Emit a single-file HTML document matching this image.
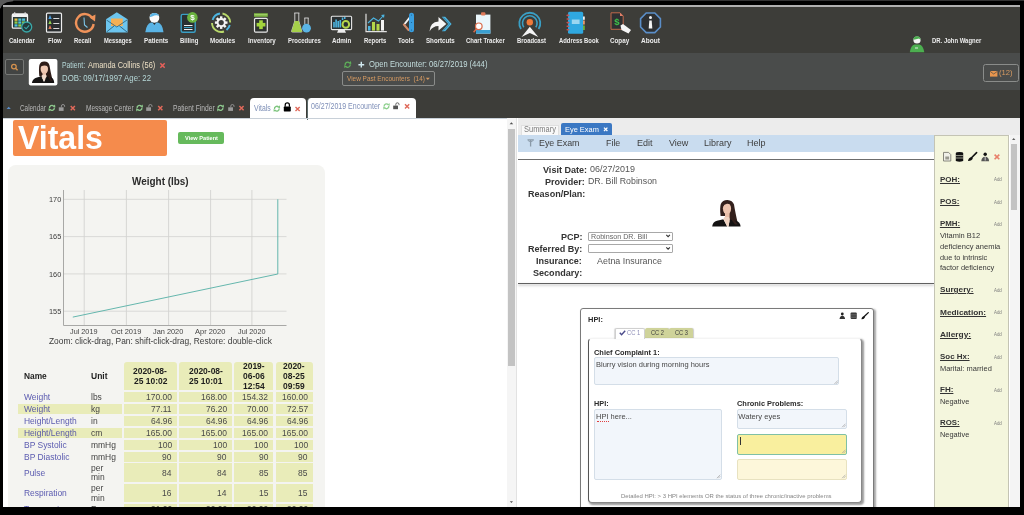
<!DOCTYPE html>
<html><head><meta charset="utf-8">
<style>
*{margin:0;padding:0;box-sizing:border-box}
html,body{width:1024px;height:515px;overflow:hidden;background:#fff;font-family:"Liberation Sans",sans-serif;position:relative;-webkit-font-smoothing:antialiased}
#wrap{position:absolute;left:0;top:0;width:1024px;height:515px;overflow:hidden;will-change:transform}
.a{position:absolute}
.nw{white-space:nowrap}
</style></head><body><div id="wrap">
<div class="a" style="left:0;top:5px;width:1024px;height:2px;background:#b0b0b0"></div>
<div class="a" style="left:0;top:7px;width:1024px;height:46px;background:#3d3d39"></div>
<div class="a" style="left:0;top:53px;width:1024px;height:37px;background:#4a4c4b"></div>
<div class="a" style="left:0;top:90px;width:1024px;height:28px;background:#3d3d39"></div>
<svg class="a" style="left:0;top:0" width="1024" height="60" viewBox="0 0 1024 60">
<!-- Calendar -->
<g>
<rect x="12.3" y="14" width="15.2" height="14.2" rx="1.2" fill="#2a3a3a" stroke="#f2f2f2" stroke-width="1.3"/>
<rect x="12.3" y="14" width="15.2" height="3" fill="#f2f2f2"/>
<rect x="14" y="12.3" width="1.3" height="2.5" fill="#ddd"/><rect x="24.5" y="12.3" width="1.3" height="2.5" fill="#ddd"/>
<rect x="14.5" y="18.5" width="3" height="2.3" fill="#e8c64a"/><rect x="18.3" y="18.5" width="3" height="2.3" fill="#4cc3d9"/><rect x="22.1" y="18.5" width="3" height="2.3" fill="#4cc3d9"/>
<rect x="14.5" y="21.4" width="3" height="2.3" fill="#8fcf50"/><rect x="18.3" y="21.4" width="3" height="2.3" fill="#4cc3d9"/><rect x="22.1" y="21.4" width="3" height="2.3" fill="#8fcf50"/>
<rect x="14.5" y="24.3" width="3" height="2.3" fill="#4cc3d9"/><rect x="18.3" y="24.3" width="3" height="2.3" fill="#8fcf50"/>
<circle cx="26.7" cy="27" r="5" fill="#243a3c" stroke="#3aa8a8" stroke-width="1.3"/>
<path d="M24.4 27.1 L26.1 28.8 L29.2 25.3" fill="none" stroke="#3aa8a8" stroke-width="1.1"/>
</g>
<!-- Flow -->
<g>
<rect x="46.5" y="13.2" width="15" height="19" rx="1" fill="#2a2e30" stroke="#efefef" stroke-width="1.2"/>
<path d="M48.3 19 L50 15 L51.7 19Z" fill="#4a9fe0"/>
<path d="M48.3 24 L50 20 L51.7 24Z" fill="#8fcf50"/>
<path d="M48.3 29 L50 25 L51.7 29Z" fill="#e07a5a"/>
<rect x="53.3" y="18" width="6" height="0.9" fill="#eee"/><rect x="53.3" y="23" width="6" height="0.9" fill="#eee"/><rect x="53.3" y="28" width="6" height="0.9" fill="#eee"/>
</g>
<!-- Recall -->
<g>
<path d="M92.5 18.5 A8.8 8.8 0 1 0 93.6 24" fill="none" stroke="#f0935a" stroke-width="2.4"/>
<path d="M89.5 17.5 L95.5 14.5 L95 21.5Z" fill="#f0935a"/>
<path d="M84 17.5 L84.5 25 L87.5 27.5" fill="none" stroke="#7cc4e8" stroke-width="1.1"/>
</g>
<!-- Messages -->
<g>
<path d="M106 19.3 L116.8 12.2 L127.6 19.3 L127.6 32.5 L106 32.5Z" fill="#6cc5ee"/>
<path d="M111 18.5 L122.8 18.5 L122.8 26 L111 26Z" fill="#f5b055"/>
<path d="M106.5 20 L116.8 27 L127 20" fill="none" stroke="#2c5f7a" stroke-width="0.8"/>
<path d="M106.5 32 L114 26 M127 32 L119.5 26" fill="none" stroke="#2c5f7a" stroke-width="0.9"/>
</g>
<!-- Patients -->
<g>
<path d="M145.3 32.3 Q146.5 23.5 151 22.6 L157.8 22.6 Q162.5 23.5 163.5 32.3Z" fill="#5ab4e5"/>
<path d="M152.5 22.6 L154.4 25 L156.3 22.6Z" fill="#2a2e30"/>
<circle cx="154.4" cy="17.8" r="4.9" fill="#fafafa"/>
<path d="M149.6 17.2 Q150.3 12.9 154.4 12.9 Q158.3 12.9 159.1 16 Q157 14.6 154.5 15.6 Q152 16.6 149.6 17.2Z" fill="#5ab4e5"/>
</g>
<!-- Billing -->
<g>
<rect x="181.2" y="14.4" width="14" height="17.8" rx="1.5" fill="#2a3032" stroke="#3a9fc5" stroke-width="1.4"/>
<rect x="184" y="25" width="8.5" height="1" fill="#f0f0f0"/><rect x="184" y="27" width="8.5" height="1" fill="#3a9fc5"/><rect x="184" y="29" width="8.5" height="1" fill="#f0f0f0"/>
<circle cx="192.4" cy="17.4" r="5.3" fill="#6ab33e"/>
<text x="192.4" y="20.3" font-family="Liberation Sans" font-weight="bold" font-size="8" fill="#fff" text-anchor="middle">$</text>
</g>
<!-- Modules -->
<g fill="none" stroke-width="1.9">
<path d="M212.6 20 A9.2 9.2 0 0 1 220 13.5" stroke="#4cb4e0"/>
<path d="M222.5 13.5 A9.2 9.2 0 0 1 230.2 22.5" stroke="#b8d86a"/>
<path d="M229.8 25 A9.2 9.2 0 0 1 226.5 30" stroke="#4cb4e0"/>
<path d="M224 31.5 A9.2 9.2 0 0 1 212 23" stroke="#b8d86a"/>
</g>
<g transform="translate(221.2 22.6)">
<circle r="4.6" fill="#f4f4f4"/>
<g fill="#f4f4f4"><rect x="-1.2" y="-6.3" width="2.4" height="12.6"/><rect x="-1.2" y="-6.3" width="2.4" height="12.6" transform="rotate(45)"/><rect x="-1.2" y="-6.3" width="2.4" height="12.6" transform="rotate(90)"/><rect x="-1.2" y="-6.3" width="2.4" height="12.6" transform="rotate(135)"/></g>
<circle r="2.6" fill="#3a3a38"/>
</g>
<!-- Inventory -->
<g>
<rect x="254" y="13.2" width="13.8" height="3.6" fill="#7cb342"/>
<rect x="254.5" y="14.2" width="12.8" height="1" fill="#a6d36b"/>
<rect x="254.5" y="18.4" width="12.8" height="13.8" rx="1.2" fill="#2e3230" stroke="#e8e8e8" stroke-width="1.2"/>
<rect x="259.2" y="20.3" width="3.6" height="8.8" fill="#a4d63c"/><rect x="256.6" y="22.9" width="8.8" height="3.6" fill="#a4d63c"/>
</g>
<!-- Procedures -->
<g>
<path d="M294.2 13 L299.4 13 M294.8 13 L294.8 21 L291.5 31.5 Q291.5 32 292.5 32 L301.5 32 Q302 32 301.8 31.5 L298.8 21 L298.8 13" fill="none" stroke="#d8d8d8" stroke-width="0.9"/>
<path d="M294.8 21 L298.8 21 L301.8 31.6 Q302 32 301.5 32 L292.5 32 Q291.5 32 291.5 31.5Z" fill="#a5d04a"/>
<path d="M304.3 18 L308.7 18 M304.8 18 L304.8 24.5 M308.2 18 L308.2 24.5" fill="none" stroke="#d8d8d8" stroke-width="0.9"/>
<circle cx="306.5" cy="28.2" r="4.4" fill="#5ab4e5"/>
</g>
<!-- Admin -->
<g>
<rect x="331.3" y="16.3" width="20.3" height="13.3" rx="1" fill="#2a3032" stroke="#e8e8e8" stroke-width="1.1"/>
<path d="M338.5 29.6 L337 32.8 L346 32.8 L344.5 29.6Z" fill="#eee"/>
<rect x="333.2" y="22" width="1.6" height="5.5" fill="#4cb4e0"/><rect x="335.3" y="19.5" width="1.6" height="8" fill="#4cb4e0"/><rect x="337.4" y="21" width="1.6" height="6.5" fill="#4cb4e0"/><rect x="339.5" y="20" width="1.6" height="7.5" fill="#4cb4e0"/>
<rect x="341.8" y="17.5" width="1.5" height="2.5" fill="#4cb4e0"/><rect x="344" y="17" width="1.5" height="2" fill="#4cb4e0"/>
<circle cx="345.8" cy="24.4" r="3.3" fill="none" stroke="#b5d64a" stroke-width="2"/>
</g>
<!-- Reports -->
<g>
<path d="M366 13.8 L366 31.6 L386.8 31.6" fill="none" stroke="#e0e0e0" stroke-width="1.2"/>
<rect x="368" y="26" width="2.5" height="4.6" fill="#4cb4e0"/>
<rect x="372" y="22" width="3" height="8.6" fill="#b5d64a"/>
<rect x="376.5" y="24" width="3" height="6.6" fill="#b5d64a"/>
<rect x="381" y="20" width="3" height="10.6" fill="#f4f4f4"/>
<path d="M368 23 L373.5 18 L378.5 21 L383 16" fill="none" stroke="#4cb4e0" stroke-width="1.1"/>
<path d="M381 15 L384.5 14.5 L384 18Z" fill="#4cb4e0"/>
</g>
<!-- Tools -->
<g>
<path d="M410.5 16.5 L405 23.5" stroke="#f4f4f4" stroke-width="2" stroke-linecap="round"/>
<path d="M403.8 24.5 L408.5 30" stroke="#d08a6a" stroke-width="2" stroke-linecap="round"/>
<rect x="409" y="12.8" width="5" height="19.5" rx="2.5" fill="#3a9fe0"/>
<circle cx="411.5" cy="15" r="0.6" fill="#1c5f8a"/><circle cx="411.5" cy="22.5" r="0.6" fill="#1c5f8a"/><circle cx="411.5" cy="30" r="0.6" fill="#1c5f8a"/>
</g>
<!-- Shortcuts -->
<g>
<path d="M429.5 31.5 Q430 22 438.5 21.5 L438.5 17 L446.3 24 L438.5 30.5 L438.5 26 Q432.5 26 429.5 31.5Z" fill="#f6f6f6"/>
<path d="M441.8 16.8 L445.2 16.8 L451.6 24 L445.2 31.2 L441.8 31.2 L448.2 24Z" fill="#4cb4e0"/><path d="M443.4 17.5 L449.6 24 L443.4 30.5" fill="none" stroke="#1f4f66" stroke-width="0.5"/>
</g>
<!-- Chart Tracker -->
<g>
<rect x="476" y="14.6" width="14.4" height="19" fill="#eaf6fb"/>
<rect x="476" y="30" width="14.4" height="3.6" fill="#3a9fd0"/>
<rect x="481" y="12.2" width="4.4" height="3.2" rx="1" fill="#e07a5a"/>
<circle cx="478.8" cy="26.3" r="3.3" fill="#fff" stroke="#d86a4a" stroke-width="1.2"/>
<path d="M476.5 28.8 L473.6 32.2" stroke="#d86a4a" stroke-width="1.5"/>
</g>
<!-- Broadcast -->
<g fill="none" stroke="#3a9fc5">
<path d="M521 29 A10.5 10.5 0 1 1 538.6 29" stroke-width="1.8"/>
<path d="M523.8 27.2 A7.3 7.3 0 1 1 535.8 27.2" stroke-width="1.6"/>
</g>
<circle cx="529.8" cy="22.3" r="3.2" fill="#f07a3a"/>
<path d="M529.8 26.8 L521.5 37 L529.8 33 L538.3 37Z" fill="#f4f4f4"/>
<!-- Address Book -->
<g>
<rect x="568" y="11.8" width="15.2" height="22" rx="1.6" fill="#2fa8e0"/>
<rect x="583" y="16.5" width="1.8" height="3.3" fill="#f0f0f0"/><rect x="583" y="20.5" width="1.8" height="4" fill="#e89a6a"/><rect x="583" y="25.5" width="1.8" height="4.5" fill="#6ab33e"/>
<g fill="#c85050"><rect x="566.4" y="14.6" width="3" height="1.6" rx="0.8"/><rect x="566.4" y="18.2" width="3" height="1.6" rx="0.8"/><rect x="566.4" y="21.8" width="3" height="1.6" rx="0.8"/><rect x="566.4" y="25.4" width="3" height="1.6" rx="0.8"/><rect x="566.4" y="29" width="3" height="1.6" rx="0.8"/></g>
<rect x="571.8" y="19.5" width="7.8" height="4.5" fill="#9ad6f0"/>
</g>
<!-- Copay -->
<g>
<path d="M611 12.8 L620 12.8 L623.2 16 L623.2 29.3 L611 29.3Z" fill="#2e3032" stroke="#c0694a" stroke-width="1"/>
<path d="M620 12.8 L623.2 16 L620 16Z" fill="#e0806a"/>
<text x="617" y="24.5" font-family="Liberation Sans" font-weight="bold" font-size="9.5" fill="#3ec04a" text-anchor="middle">$</text>
<path d="M620.5 25.5 L623 24 L631 30 L628.5 33.5 L621.5 30Z" fill="#f6f6f6"/>
</g>
<!-- About -->
<g>
<path d="M646.2 13 L654.8 13 L660.4 18.6 L660.4 27 L654.8 32.6 L646.2 32.6 L640.6 27 L640.6 18.6Z" fill="#2e3032" stroke="#5b8ec8" stroke-width="1.6"/>
<circle cx="650.5" cy="17.6" r="1.5" fill="#f4f4f4"/>
<path d="M649.3 20.5 L651.7 20.5 L652.3 28.5 L648.7 28.5Z" fill="#f4f4f4"/>
</g>
<!-- Doctor -->
<g>
<path d="M909.8 52.2 Q911 45 914.5 44.5 L919.5 44.5 Q923 45 924.3 52.2Z" fill="#4caf50"/>
<circle cx="917" cy="40" r="3.6" fill="#f4f4f4"/>
<path d="M913.4 39.8 A3.6 3.6 0 0 1 920.6 39.8 L919 38.6 L915 39.5Z" fill="#4caf50"/>
<rect x="915" y="47.5" width="3" height="1" fill="#e0f0e0"/>
</g>
</svg>

<div class="a nw" style="left:9.00px;top:35.80px;font-size:7.8px;line-height:9px;color:#ececec;font-weight:bold;transform:scaleX(0.773);transform-origin:0 0;">Calendar</div>
<div class="a nw" style="left:47.60px;top:35.80px;font-size:7.8px;line-height:9px;color:#ececec;font-weight:bold;transform:scaleX(0.777);transform-origin:0 0;">Flow</div>
<div class="a nw" style="left:74.00px;top:35.80px;font-size:7.8px;line-height:9px;color:#ececec;font-weight:bold;transform:scaleX(0.757);transform-origin:0 0;">Recall</div>
<div class="a nw" style="left:103.60px;top:35.80px;font-size:7.8px;line-height:9px;color:#ececec;font-weight:bold;transform:scaleX(0.746);transform-origin:0 0;">Messages</div>
<div class="a nw" style="left:143.60px;top:35.80px;font-size:7.8px;line-height:9px;color:#ececec;font-weight:bold;transform:scaleX(0.801);transform-origin:0 0;">Patients</div>
<div class="a nw" style="left:179.60px;top:35.80px;font-size:7.8px;line-height:9px;color:#ececec;font-weight:bold;transform:scaleX(0.768);transform-origin:0 0;">Billing</div>
<div class="a nw" style="left:210.20px;top:35.80px;font-size:7.8px;line-height:9px;color:#ececec;font-weight:bold;transform:scaleX(0.797);transform-origin:0 0;">Modules</div>
<div class="a nw" style="left:247.60px;top:35.80px;font-size:7.8px;line-height:9px;color:#ececec;font-weight:bold;transform:scaleX(0.792);transform-origin:0 0;">Inventory</div>
<div class="a nw" style="left:287.60px;top:35.80px;font-size:7.8px;line-height:9px;color:#ececec;font-weight:bold;transform:scaleX(0.764);transform-origin:0 0;">Procedures</div>
<div class="a nw" style="left:332.10px;top:35.80px;font-size:7.8px;line-height:9px;color:#ececec;font-weight:bold;transform:scaleX(0.795);transform-origin:0 0;">Admin</div>
<div class="a nw" style="left:363.60px;top:35.80px;font-size:7.8px;line-height:9px;color:#ececec;font-weight:bold;transform:scaleX(0.760);transform-origin:0 0;">Reports</div>
<div class="a nw" style="left:398.35px;top:35.80px;font-size:7.8px;line-height:9px;color:#ececec;font-weight:bold;transform:scaleX(0.781);transform-origin:0 0;">Tools</div>
<div class="a nw" style="left:425.60px;top:35.80px;font-size:7.8px;line-height:9px;color:#ececec;font-weight:bold;transform:scaleX(0.791);transform-origin:0 0;">Shortcuts</div>
<div class="a nw" style="left:465.60px;top:35.80px;font-size:7.8px;line-height:9px;color:#ececec;font-weight:bold;transform:scaleX(0.772);transform-origin:0 0;">Chart Tracker</div>
<div class="a nw" style="left:517.10px;top:35.80px;font-size:7.8px;line-height:9px;color:#ececec;font-weight:bold;transform:scaleX(0.758);transform-origin:0 0;">Broadcast</div>
<div class="a nw" style="left:558.60px;top:35.80px;font-size:7.8px;line-height:9px;color:#ececec;font-weight:bold;transform:scaleX(0.753);transform-origin:0 0;">Address Book</div>
<div class="a nw" style="left:610.20px;top:35.80px;font-size:7.8px;line-height:9px;color:#ececec;font-weight:bold;transform:scaleX(0.805);transform-origin:0 0;">Copay</div>
<div class="a nw" style="left:640.60px;top:35.80px;font-size:7.8px;line-height:9px;color:#ececec;font-weight:bold;transform:scaleX(0.835);transform-origin:0 0;">About</div>
<div class="a" style="left:5.4px;top:59px;width:18.4px;height:16px;border:1px solid #767876;border-radius:2px;background:#424443"></div>
<svg class="a" style="left:0;top:50px" width="70" height="40" viewBox="0 50 70 40">
<circle cx="13.9" cy="66.6" r="2.3" fill="none" stroke="#d4914e" stroke-width="1.3"/>
<path d="M15.5 68.3 L17.6 70.3" stroke="#d4914e" stroke-width="1.5"/>
<rect x="28.8" y="58.9" width="28.6" height="26.6" rx="2" fill="#fff"/>
<path d="M39.3 76 Q38.6 69 39.4 65 Q40.6 61.5 44.4 61.6 Q48.6 61.8 49.5 65.5 Q50.5 72 52.5 80 L47 80Z" fill="#2e1c18"/><ellipse cx="44.3" cy="68.9" rx="3.7" ry="5.2" fill="#f0c8b2"/><path d="M40.6 66.5 Q41.2 62.8 44.8 62.9 Q48.2 63.2 48.6 67.5 Q46.5 64 40.6 66.5Z" fill="#2e1c18"/><rect x="42.6" y="72.5" width="3.4" height="4.5" fill="#e8bca6"/><path d="M31.9 83 Q32.5 78.4 37 77.4 L41.4 76.2 L44 82 L46.8 76.2 L51.4 77.4 Q54 78.4 54.2 83Z" fill="#161414"/><path d="M41.4 76 L44 81.5 L46.8 76 L45.8 74.8 L42.6 74.8Z" fill="#f4dccc"/><path d="M48 72.5 Q49.8 76.5 52.5 81 L50.5 81 Q48.3 77.5 47.2 74Z" fill="#2e1c18"/><!-- refresh icon -->
</svg>
<svg class="a" style="left:159px;top:62px" width="7" height="7" viewBox="0 0 7 7"><path d="M1.3 1.3 L5.7 5.7 M5.7 1.3 L1.3 5.7" stroke="#e8605a" stroke-width="1.5"/></svg>

<svg class="a" style="left:340px;top:58px" width="30" height="14" viewBox="340 58 30 14">
<path d="M345.20 65.10 A2.5 2.5 0 0 1 349.57 63.05" fill="none" stroke="#5fb05a" stroke-width="1.3"/><path d="M350.20 64.30 A2.5 2.5 0 0 1 345.82 66.35" fill="none" stroke="#5fb05a" stroke-width="1.3"/><path d="M348.57 63.33 L351.32 64.20 L350.95 61.08Z" fill="#5fb05a"/><path d="M346.82 66.08 L344.07 65.20 L344.45 68.33Z" fill="#5fb05a"/><path d="M361.3 61.8 L361.3 67.6 M358.4 64.7 L364.2 64.7" stroke="#d0e8f0" stroke-width="1.4"/>
</svg>
<div class="a" style="left:342px;top:70.8px;width:93px;height:15.4px;border:1px solid #8a8c8a;border-radius:2px"></div>

<div class="a" style="left:983px;top:64.3px;width:35.6px;height:18.2px;border:1px solid #8a8c8a;border-radius:2.5px"></div>
<svg class="a" style="left:989.5px;top:70.5px" width="8" height="6" viewBox="0 0 8 6"><rect x="0" y="0" width="7.4" height="5.6" fill="#e8964e"/><path d="M0 0.3 L3.7 3 L7.4 0.3" fill="none" stroke="#4a4c4b" stroke-width="0.7"/></svg>
<div class="a nw" style="left:62.40px;top:60.20px;font-size:8.4px;line-height:10px;color:#b6d8d8;transform:scaleX(0.813);transform-origin:0 0;">Patient: </div>
<div class="a nw" style="left:88.00px;top:60.20px;font-size:8.4px;line-height:10px;color:#ecdfc4;transform:scaleX(0.886);transform-origin:0 0;">Amanda Collins (56)</div>
<div class="a nw" style="left:62.40px;top:72.80px;font-size:8.4px;line-height:10px;color:#b6d8d8;transform:scaleX(0.933);transform-origin:0 0;">DOB: 09/17/1997 Age: 22</div>
<div class="a nw" style="left:369.00px;top:59.40px;font-size:8.4px;line-height:10px;color:#c4dede;transform:scaleX(0.915);transform-origin:0 0;">Open Encounter: 06/27/2019 (444)</div>
<div class="a nw" style="left:347.40px;top:74.40px;font-size:7.4px;line-height:9px;color:#d69a62;transform:scaleX(0.871);transform-origin:0 0;white-space:pre">View Past Encounters  (14)</div>
<svg class="a" style="left:425px;top:77px" width="6" height="4" viewBox="0 0 6 4"><path d="M0.8 0.8 L2.8 3 L4.8 0.8Z" fill="#d69a62"/></svg>
<div class="a nw" style="left:931.70px;top:36.60px;font-size:6.8px;line-height:8px;color:#ececec;font-weight:bold;transform:scaleX(0.874);transform-origin:0 0;">DR. John Wagner</div>
<div class="a nw" style="left:998.70px;top:68.40px;font-size:8px;line-height:10px;color:#d69a62;transform:scaleX(0.955);transform-origin:0 0;">(12)</div>
<div class="a" style="left:250px;top:98px;width:56px;height:22px;background:#fff;border-radius:4px 4px 0 0"></div>
<div class="a" style="left:306.5px;top:98px;width:109.5px;height:22px;background:#fff;border-radius:4px 4px 0 0;border-left:1px solid #5a6a6a"></div>
<div class="a" style="left:3px;top:117.5px;width:514px;height:1px;background:#c8d0d8"></div>
<div class="a nw" style="left:20.00px;top:103.60px;font-size:8.2px;line-height:10px;color:#b9b9b9;transform:scaleX(0.779);transform-origin:0 0;">Calendar</div>
<div class="a nw" style="left:85.50px;top:103.60px;font-size:8.2px;line-height:10px;color:#b9b9b9;transform:scaleX(0.792);transform-origin:0 0;">Message Center</div>
<div class="a nw" style="left:173.00px;top:103.60px;font-size:8.2px;line-height:10px;color:#b9b9b9;transform:scaleX(0.818);transform-origin:0 0;">Patient Finder</div>
<div class="a nw" style="left:254.00px;top:104.20px;font-size:8.2px;line-height:10px;color:#7b8db5;transform:scaleX(0.840);transform-origin:0 0;">Vitals</div>
<div class="a nw" style="left:310.80px;top:101.90px;font-size:8.2px;line-height:10px;color:#7f8fb8;transform:scaleX(0.858);transform-origin:0 0;">06/27/2019 Encounter</div>
<svg class="a" style="left:0;top:90px" width="420" height="30" viewBox="0 90 420 30"><path d="M6.6 109 L8.7 106.8 L10.8 109Z" fill="#5b8ec8"/><path d="M49.50 108.30 A2.4 2.4 0 0 1 53.70 106.32" fill="none" stroke="#8ec98e" stroke-width="1.3"/><path d="M54.30 107.50 A2.4 2.4 0 0 1 50.10 109.48" fill="none" stroke="#8ec98e" stroke-width="1.3"/><path d="M52.74 106.58 L55.38 107.42 L55.02 104.42Z" fill="#8ec98e"/><path d="M51.06 109.22 L48.42 108.38 L48.78 111.38Z" fill="#8ec98e"/><rect x="58.8" y="107.3" width="4.8" height="3.6" fill="#9a9a9a"/><path d="M61.4 107.3 L61.4 106.1 A1.6 1.6 0 0 1 64.6 106.1 L64.6 106.89999999999999" fill="none" stroke="#9a9a9a" stroke-width="0.9"/><path d="M70.7 106.0 L74.89999999999999 110.19999999999999 M74.89999999999999 106.0 L70.7 110.19999999999999" stroke="#e0695a" stroke-width="1.5"/><path d="M137.10 108.30 A2.4 2.4 0 0 1 141.30 106.32" fill="none" stroke="#8ec98e" stroke-width="1.3"/><path d="M141.90 107.50 A2.4 2.4 0 0 1 137.70 109.48" fill="none" stroke="#8ec98e" stroke-width="1.3"/><path d="M140.34 106.58 L142.98 107.42 L142.62 104.42Z" fill="#8ec98e"/><path d="M138.66 109.22 L136.02 108.38 L136.38 111.38Z" fill="#8ec98e"/><rect x="146.2" y="107.3" width="4.8" height="3.6" fill="#9a9a9a"/><path d="M148.79999999999998 107.3 L148.79999999999998 106.1 A1.6 1.6 0 0 1 152.0 106.1 L152.0 106.89999999999999" fill="none" stroke="#9a9a9a" stroke-width="0.9"/><path d="M158.20000000000002 106.0 L162.4 110.19999999999999 M162.4 106.0 L158.20000000000002 110.19999999999999" stroke="#e0695a" stroke-width="1.5"/><path d="M218.10 108.30 A2.4 2.4 0 0 1 222.30 106.32" fill="none" stroke="#8ec98e" stroke-width="1.3"/><path d="M222.90 107.50 A2.4 2.4 0 0 1 218.70 109.48" fill="none" stroke="#8ec98e" stroke-width="1.3"/><path d="M221.34 106.58 L223.98 107.42 L223.62 104.42Z" fill="#8ec98e"/><path d="M219.66 109.22 L217.02 108.38 L217.38 111.38Z" fill="#8ec98e"/><rect x="228.2" y="107.3" width="4.8" height="3.6" fill="#9a9a9a"/><path d="M230.79999999999998 107.3 L230.79999999999998 106.1 A1.6 1.6 0 0 1 234.0 106.1 L234.0 106.89999999999999" fill="none" stroke="#9a9a9a" stroke-width="0.9"/><path d="M239.4 106.0 L243.6 110.19999999999999 M243.6 106.0 L239.4 110.19999999999999" stroke="#e0695a" stroke-width="1.5"/><path d="M274.50 109.10 A2.3 2.3 0 0 1 278.53 107.18" fill="none" stroke="#7cc47c" stroke-width="1.3"/><path d="M279.10 108.30 A2.3 2.3 0 0 1 275.07 110.22" fill="none" stroke="#7cc47c" stroke-width="1.3"/><path d="M277.61 107.44 L280.13 108.24 L279.79 105.37Z" fill="#7cc47c"/><path d="M276.00 109.97 L273.47 109.16 L273.81 112.03Z" fill="#7cc47c"/><rect x="283.8" y="106.6" width="7" height="4.8" rx="0.6" fill="#000"/><path d="M285.2 106.8 L285.2 105 A2.1 2.1 0 0 1 289.4 105 L289.4 106.8" fill="none" stroke="#000" stroke-width="1.2"/><path d="M295.5 106.9 L299.70000000000005 111.1 M299.70000000000005 106.9 L295.5 111.1" stroke="#e0695a" stroke-width="1.4"/><path d="M384.20 106.70 A2.3 2.3 0 0 1 388.23 104.78" fill="none" stroke="#8ed08e" stroke-width="1.3"/><path d="M388.80 105.90 A2.3 2.3 0 0 1 384.77 107.82" fill="none" stroke="#8ed08e" stroke-width="1.3"/><path d="M387.31 105.03 L389.83 105.84 L389.49 102.97Z" fill="#8ed08e"/><path d="M385.69 107.56 L383.17 106.76 L383.51 109.63Z" fill="#8ed08e"/><rect x="393.2" y="105.6" width="4.8" height="3.6" fill="#555"/><path d="M395.8 105.6 L395.8 104.39999999999999 A1.6 1.6 0 0 1 399.0 104.39999999999999 L399.0 105.19999999999999" fill="none" stroke="#555" stroke-width="0.9"/><path d="M405.0 104.2 L409.20000000000005 108.39999999999999 M409.20000000000005 104.2 L405.0 108.39999999999999" stroke="#e0695a" stroke-width="1.4"/></svg>
<div class="a" style="left:13px;top:120.2px;width:154px;height:35.6px;background:#f58b4c;border-radius:2px"></div>
<div class="a nw" style="left:17.80px;top:118.50px;font-size:32.5px;line-height:38px;color:#fff;font-weight:bold;transform:scaleX(0.985);transform-origin:0 0;">Vitals</div>
<div class="a" style="left:178px;top:132px;width:46px;height:12px;background:#66ba5c;border-radius:2px"></div>
<div class="a nw" style="left:184.50px;top:134.50px;font-size:6px;line-height:7px;color:#fff;font-weight:bold;transform:scaleX(0.936);transform-origin:0 0;">View Patient</div>
<div class="a" style="left:7.6px;top:165px;width:317px;height:350px;background:#f4f4f1;border-radius:8px 8px 0 0"></div>
<svg class="a" style="left:0;top:160px" width="330" height="190" viewBox="0 160 330 190"><line x1="63.5" y1="199.3" x2="286.5" y2="199.3" stroke="#d6d6d4" stroke-width="0.9"/><line x1="63.5" y1="236.6" x2="286.5" y2="236.6" stroke="#d6d6d4" stroke-width="0.9"/><line x1="63.5" y1="273.9" x2="286.5" y2="273.9" stroke="#d6d6d4" stroke-width="0.9"/><line x1="63.5" y1="311.2" x2="286.5" y2="311.2" stroke="#d6d6d4" stroke-width="0.9"/><line x1="84.2" y1="190" x2="84.2" y2="325.5" stroke="#d2d2d0" stroke-width="0.9"/><line x1="126.4" y1="190" x2="126.4" y2="325.5" stroke="#d2d2d0" stroke-width="0.9"/><line x1="168.6" y1="190" x2="168.6" y2="325.5" stroke="#d2d2d0" stroke-width="0.9"/><line x1="210.6" y1="190" x2="210.6" y2="325.5" stroke="#d2d2d0" stroke-width="0.9"/><line x1="251.9" y1="190" x2="251.9" y2="325.5" stroke="#d2d2d0" stroke-width="0.9"/><path d="M63.5 190 L63.5 325.5 L286.5 325.5" fill="none" stroke="#a8a8a6" stroke-width="1"/><path d="M72.8 317.1 L277.8 274 L277.8 199.3" fill="none" stroke="#5db3aa" stroke-width="0.95"/></svg>
<div class="a nw" style="left:131.60px;top:175.20px;font-size:10.6px;line-height:12px;color:#2b2b2b;font-weight:bold;transform:scaleX(0.938);transform-origin:0 0;">Weight (lbs)</div>
<div class="a nw" style="left:49.00px;top:195.90px;font-size:8px;line-height:8px;color:#3a3a3a;transform:scaleX(0.921);transform-origin:0 0;">170</div>
<div class="a nw" style="left:49.00px;top:233.20px;font-size:8px;line-height:8px;color:#3a3a3a;transform:scaleX(0.921);transform-origin:0 0;">165</div>
<div class="a nw" style="left:49.00px;top:270.50px;font-size:8px;line-height:8px;color:#3a3a3a;transform:scaleX(0.921);transform-origin:0 0;">160</div>
<div class="a nw" style="left:49.00px;top:307.80px;font-size:8px;line-height:8px;color:#3a3a3a;transform:scaleX(0.921);transform-origin:0 0;">155</div>
<div class="a nw" style="left:70.45px;top:328.20px;font-size:7.2px;line-height:8px;color:#444;transform:scaleX(1.011);transform-origin:0 0;">Jul 2019</div>
<div class="a nw" style="left:111.25px;top:328.20px;font-size:7.2px;line-height:8px;color:#444;transform:scaleX(1.039);transform-origin:0 0;">Oct 2019</div>
<div class="a nw" style="left:153.45px;top:328.20px;font-size:7.2px;line-height:8px;color:#444;transform:scaleX(1.024);transform-origin:0 0;">Jan 2020</div>
<div class="a nw" style="left:195.45px;top:328.20px;font-size:7.2px;line-height:8px;color:#444;transform:scaleX(1.039);transform-origin:0 0;">Apr 2020</div>
<div class="a nw" style="left:238.15px;top:328.20px;font-size:7.2px;line-height:8px;color:#444;transform:scaleX(1.011);transform-origin:0 0;">Jul 2020</div>
<div class="a nw" style="left:48.70px;top:336.50px;font-size:8.2px;line-height:10px;color:#3a3a3a;transform:scaleX(1.023);transform-origin:0 0;">Zoom: click-drag, Pan: shift-click-drag, Restore: double-click</div>
<div class="a" style="left:123.9px;top:361.5px;width:53.0px;height:28.8px;background:#e9ecb9;border-radius:3px 3px 0 0"></div>
<div class="a" style="left:179.2px;top:361.5px;width:52.8px;height:28.8px;background:#e9ecb9;border-radius:3px 3px 0 0"></div>
<div class="a" style="left:234.2px;top:361.5px;width:39.1px;height:28.8px;background:#e9ecb9;border-radius:3px 3px 0 0"></div>
<div class="a" style="left:275.5px;top:361.5px;width:37.5px;height:28.8px;background:#e9ecb9;border-radius:3px 3px 0 0"></div>
<div class="a" style="left:123.9px;top:392.3px;width:53.0px;height:10.2px;background:#e9ecb9"></div>
<div class="a" style="left:179.2px;top:392.3px;width:52.8px;height:10.2px;background:#e9ecb9"></div>
<div class="a" style="left:234.2px;top:392.3px;width:39.1px;height:10.2px;background:#e9ecb9"></div>
<div class="a" style="left:275.5px;top:392.3px;width:37.5px;height:10.2px;background:#e9ecb9"></div>
<div class="a" style="left:17.8px;top:404.1px;width:104.3px;height:10.4px;background:#e9ecb9"></div>
<div class="a" style="left:123.9px;top:404.1px;width:53.0px;height:10.4px;background:#e9ecb9"></div>
<div class="a" style="left:179.2px;top:404.1px;width:52.8px;height:10.4px;background:#e9ecb9"></div>
<div class="a" style="left:234.2px;top:404.1px;width:39.1px;height:10.4px;background:#e9ecb9"></div>
<div class="a" style="left:275.5px;top:404.1px;width:37.5px;height:10.4px;background:#e9ecb9"></div>
<div class="a" style="left:123.9px;top:415.9px;width:53.0px;height:10.5px;background:#e9ecb9"></div>
<div class="a" style="left:179.2px;top:415.9px;width:52.8px;height:10.5px;background:#e9ecb9"></div>
<div class="a" style="left:234.2px;top:415.9px;width:39.1px;height:10.5px;background:#e9ecb9"></div>
<div class="a" style="left:275.5px;top:415.9px;width:37.5px;height:10.5px;background:#e9ecb9"></div>
<div class="a" style="left:17.8px;top:427.8px;width:104.3px;height:10.3px;background:#e9ecb9"></div>
<div class="a" style="left:123.9px;top:427.8px;width:53.0px;height:10.3px;background:#e9ecb9"></div>
<div class="a" style="left:179.2px;top:427.8px;width:52.8px;height:10.3px;background:#e9ecb9"></div>
<div class="a" style="left:234.2px;top:427.8px;width:39.1px;height:10.3px;background:#e9ecb9"></div>
<div class="a" style="left:275.5px;top:427.8px;width:37.5px;height:10.3px;background:#e9ecb9"></div>
<div class="a" style="left:123.9px;top:439.7px;width:53.0px;height:10.4px;background:#e9ecb9"></div>
<div class="a" style="left:179.2px;top:439.7px;width:52.8px;height:10.4px;background:#e9ecb9"></div>
<div class="a" style="left:234.2px;top:439.7px;width:39.1px;height:10.4px;background:#e9ecb9"></div>
<div class="a" style="left:275.5px;top:439.7px;width:37.5px;height:10.4px;background:#e9ecb9"></div>
<div class="a" style="left:123.9px;top:451.6px;width:53.0px;height:10.4px;background:#e9ecb9"></div>
<div class="a" style="left:179.2px;top:451.6px;width:52.8px;height:10.4px;background:#e9ecb9"></div>
<div class="a" style="left:234.2px;top:451.6px;width:39.1px;height:10.4px;background:#e9ecb9"></div>
<div class="a" style="left:275.5px;top:451.6px;width:37.5px;height:10.4px;background:#e9ecb9"></div>
<div class="a" style="left:123.9px;top:463.4px;width:53.0px;height:18.6px;background:#e9ecb9"></div>
<div class="a" style="left:179.2px;top:463.4px;width:52.8px;height:18.6px;background:#e9ecb9"></div>
<div class="a" style="left:234.2px;top:463.4px;width:39.1px;height:18.6px;background:#e9ecb9"></div>
<div class="a" style="left:275.5px;top:463.4px;width:37.5px;height:18.6px;background:#e9ecb9"></div>
<div class="a" style="left:123.9px;top:483.6px;width:53.0px;height:18.6px;background:#e9ecb9"></div>
<div class="a" style="left:179.2px;top:483.6px;width:52.8px;height:18.6px;background:#e9ecb9"></div>
<div class="a" style="left:234.2px;top:483.6px;width:39.1px;height:18.6px;background:#e9ecb9"></div>
<div class="a" style="left:275.5px;top:483.6px;width:37.5px;height:18.6px;background:#e9ecb9"></div>
<div class="a" style="left:123.9px;top:503.8px;width:53.0px;height:10.2px;background:#e9ecb9"></div>
<div class="a" style="left:179.2px;top:503.8px;width:52.8px;height:10.2px;background:#e9ecb9"></div>
<div class="a" style="left:234.2px;top:503.8px;width:39.1px;height:10.2px;background:#e9ecb9"></div>
<div class="a" style="left:275.5px;top:503.8px;width:37.5px;height:10.2px;background:#e9ecb9"></div>
<div class="a nw" style="left:23.75px;top:371.00px;font-size:8.6px;line-height:10px;color:#222;font-weight:bold;transform:scaleX(0.972);transform-origin:0 0;">Name</div>
<div class="a nw" style="left:90.50px;top:371.00px;font-size:8.6px;line-height:10px;color:#222;font-weight:bold;transform:scaleX(0.987);transform-origin:0 0;">Unit</div>
<div class="a nw" style="left:133.45px;top:366.10px;font-size:8.6px;line-height:10px;color:#1e1e1e;font-weight:bold;transform:scaleX(0.985);transform-origin:0 0;">2020-08-</div>
<div class="a nw" style="left:133.69px;top:376.10px;font-size:8.6px;line-height:10px;color:#1e1e1e;font-weight:bold;transform:scaleX(0.985);transform-origin:0 0;">25 10:02</div>
<div class="a nw" style="left:188.65px;top:366.10px;font-size:8.6px;line-height:10px;color:#1e1e1e;font-weight:bold;transform:scaleX(0.985);transform-origin:0 0;">2020-08-</div>
<div class="a nw" style="left:188.89px;top:376.10px;font-size:8.6px;line-height:10px;color:#1e1e1e;font-weight:bold;transform:scaleX(0.985);transform-origin:0 0;">25 10:01</div>
<div class="a nw" style="left:242.92px;top:361.30px;font-size:8.6px;line-height:10px;color:#1e1e1e;font-weight:bold;transform:scaleX(0.985);transform-origin:0 0;">2019-</div>
<div class="a nw" style="left:242.92px;top:371.30px;font-size:8.6px;line-height:10px;color:#1e1e1e;font-weight:bold;transform:scaleX(0.985);transform-origin:0 0;">06-06</div>
<div class="a nw" style="left:242.92px;top:381.30px;font-size:8.6px;line-height:10px;color:#1e1e1e;font-weight:bold;transform:scaleX(0.985);transform-origin:0 0;">12:54</div>
<div class="a nw" style="left:283.42px;top:361.30px;font-size:8.6px;line-height:10px;color:#1e1e1e;font-weight:bold;transform:scaleX(0.985);transform-origin:0 0;">2020-</div>
<div class="a nw" style="left:283.42px;top:371.30px;font-size:8.6px;line-height:10px;color:#1e1e1e;font-weight:bold;transform:scaleX(0.985);transform-origin:0 0;">08-25</div>
<div class="a nw" style="left:283.42px;top:381.30px;font-size:8.6px;line-height:10px;color:#1e1e1e;font-weight:bold;transform:scaleX(0.985);transform-origin:0 0;">09:59</div>
<div class="a nw" style="left:23.75px;top:392.40px;font-size:8.6px;line-height:10px;color:#5b5bb0;transform:scaleX(0.985);transform-origin:0 0;">Weight</div>
<div class="a nw" style="left:90.50px;top:392.40px;font-size:8.6px;line-height:10px;color:#444;transform:scaleX(0.985);transform-origin:0 0;">lbs</div>
<div class="a nw" style="left:145.80px;top:392.40px;font-size:8.6px;line-height:10px;color:#4a4a4a;transform:scaleX(0.985);transform-origin:0 0;">170.00</div>
<div class="a nw" style="left:200.90px;top:392.40px;font-size:8.6px;line-height:10px;color:#4a4a4a;transform:scaleX(0.985);transform-origin:0 0;">168.00</div>
<div class="a nw" style="left:242.20px;top:392.40px;font-size:8.6px;line-height:10px;color:#4a4a4a;transform:scaleX(0.985);transform-origin:0 0;">154.32</div>
<div class="a nw" style="left:281.90px;top:392.40px;font-size:8.6px;line-height:10px;color:#4a4a4a;transform:scaleX(0.985);transform-origin:0 0;">160.00</div>
<div class="a nw" style="left:23.75px;top:404.30px;font-size:8.6px;line-height:10px;color:#5a5aa6;transform:scaleX(0.985);transform-origin:0 0;">Weight</div>
<div class="a nw" style="left:90.50px;top:404.30px;font-size:8.6px;line-height:10px;color:#444;transform:scaleX(0.985);transform-origin:0 0;">kg</div>
<div class="a nw" style="left:151.14px;top:404.30px;font-size:8.6px;line-height:10px;color:#4a4a4a;transform:scaleX(0.985);transform-origin:0 0;">77.11</div>
<div class="a nw" style="left:205.61px;top:404.30px;font-size:8.6px;line-height:10px;color:#4a4a4a;transform:scaleX(0.985);transform-origin:0 0;">76.20</div>
<div class="a nw" style="left:246.91px;top:404.30px;font-size:8.6px;line-height:10px;color:#4a4a4a;transform:scaleX(0.985);transform-origin:0 0;">70.00</div>
<div class="a nw" style="left:286.61px;top:404.30px;font-size:8.6px;line-height:10px;color:#4a4a4a;transform:scaleX(0.985);transform-origin:0 0;">72.57</div>
<div class="a nw" style="left:23.75px;top:416.15px;font-size:8.6px;line-height:10px;color:#5b5bb0;transform:scaleX(0.985);transform-origin:0 0;">Height/Length</div>
<div class="a nw" style="left:90.50px;top:416.15px;font-size:8.6px;line-height:10px;color:#444;transform:scaleX(0.985);transform-origin:0 0;">in</div>
<div class="a nw" style="left:150.51px;top:416.15px;font-size:8.6px;line-height:10px;color:#4a4a4a;transform:scaleX(0.985);transform-origin:0 0;">64.96</div>
<div class="a nw" style="left:205.61px;top:416.15px;font-size:8.6px;line-height:10px;color:#4a4a4a;transform:scaleX(0.985);transform-origin:0 0;">64.96</div>
<div class="a nw" style="left:246.91px;top:416.15px;font-size:8.6px;line-height:10px;color:#4a4a4a;transform:scaleX(0.985);transform-origin:0 0;">64.96</div>
<div class="a nw" style="left:286.61px;top:416.15px;font-size:8.6px;line-height:10px;color:#4a4a4a;transform:scaleX(0.985);transform-origin:0 0;">64.96</div>
<div class="a nw" style="left:23.75px;top:427.95px;font-size:8.6px;line-height:10px;color:#5a5aa6;transform:scaleX(0.985);transform-origin:0 0;">Height/Length</div>
<div class="a nw" style="left:90.50px;top:427.95px;font-size:8.6px;line-height:10px;color:#444;transform:scaleX(0.985);transform-origin:0 0;">cm</div>
<div class="a nw" style="left:145.80px;top:427.95px;font-size:8.6px;line-height:10px;color:#4a4a4a;transform:scaleX(0.985);transform-origin:0 0;">165.00</div>
<div class="a nw" style="left:200.90px;top:427.95px;font-size:8.6px;line-height:10px;color:#4a4a4a;transform:scaleX(0.985);transform-origin:0 0;">165.00</div>
<div class="a nw" style="left:242.20px;top:427.95px;font-size:8.6px;line-height:10px;color:#4a4a4a;transform:scaleX(0.985);transform-origin:0 0;">165.00</div>
<div class="a nw" style="left:281.90px;top:427.95px;font-size:8.6px;line-height:10px;color:#4a4a4a;transform:scaleX(0.985);transform-origin:0 0;">165.00</div>
<div class="a nw" style="left:23.75px;top:439.90px;font-size:8.6px;line-height:10px;color:#5b5bb0;transform:scaleX(0.985);transform-origin:0 0;">BP Systolic</div>
<div class="a nw" style="left:90.50px;top:439.90px;font-size:8.6px;line-height:10px;color:#444;transform:scaleX(0.985);transform-origin:0 0;">mmHg</div>
<div class="a nw" style="left:157.57px;top:439.90px;font-size:8.6px;line-height:10px;color:#4a4a4a;transform:scaleX(0.985);transform-origin:0 0;">100</div>
<div class="a nw" style="left:212.67px;top:439.90px;font-size:8.6px;line-height:10px;color:#4a4a4a;transform:scaleX(0.985);transform-origin:0 0;">100</div>
<div class="a nw" style="left:253.97px;top:439.90px;font-size:8.6px;line-height:10px;color:#4a4a4a;transform:scaleX(0.985);transform-origin:0 0;">100</div>
<div class="a nw" style="left:293.67px;top:439.90px;font-size:8.6px;line-height:10px;color:#4a4a4a;transform:scaleX(0.985);transform-origin:0 0;">100</div>
<div class="a nw" style="left:23.75px;top:451.80px;font-size:8.6px;line-height:10px;color:#5b5bb0;transform:scaleX(0.985);transform-origin:0 0;">BP Diastolic</div>
<div class="a nw" style="left:90.50px;top:451.80px;font-size:8.6px;line-height:10px;color:#444;transform:scaleX(0.985);transform-origin:0 0;">mmHg</div>
<div class="a nw" style="left:162.28px;top:451.80px;font-size:8.6px;line-height:10px;color:#4a4a4a;transform:scaleX(0.985);transform-origin:0 0;">90</div>
<div class="a nw" style="left:217.38px;top:451.80px;font-size:8.6px;line-height:10px;color:#4a4a4a;transform:scaleX(0.985);transform-origin:0 0;">90</div>
<div class="a nw" style="left:258.68px;top:451.80px;font-size:8.6px;line-height:10px;color:#4a4a4a;transform:scaleX(0.985);transform-origin:0 0;">90</div>
<div class="a nw" style="left:298.38px;top:451.80px;font-size:8.6px;line-height:10px;color:#4a4a4a;transform:scaleX(0.985);transform-origin:0 0;">90</div>
<div class="a nw" style="left:23.75px;top:467.70px;font-size:8.6px;line-height:10px;color:#5b5bb0;transform:scaleX(0.985);transform-origin:0 0;">Pulse</div>
<div class="a nw" style="left:90.50px;top:462.60px;font-size:8.6px;line-height:10px;color:#444;transform:scaleX(0.985);transform-origin:0 0;">per</div>
<div class="a nw" style="left:90.50px;top:472.40px;font-size:8.6px;line-height:10px;color:#444;transform:scaleX(0.985);transform-origin:0 0;">min</div>
<div class="a nw" style="left:162.28px;top:467.70px;font-size:8.6px;line-height:10px;color:#4a4a4a;transform:scaleX(0.985);transform-origin:0 0;">84</div>
<div class="a nw" style="left:217.38px;top:467.70px;font-size:8.6px;line-height:10px;color:#4a4a4a;transform:scaleX(0.985);transform-origin:0 0;">84</div>
<div class="a nw" style="left:258.68px;top:467.70px;font-size:8.6px;line-height:10px;color:#4a4a4a;transform:scaleX(0.985);transform-origin:0 0;">85</div>
<div class="a nw" style="left:298.38px;top:467.70px;font-size:8.6px;line-height:10px;color:#4a4a4a;transform:scaleX(0.985);transform-origin:0 0;">85</div>
<div class="a nw" style="left:23.75px;top:487.90px;font-size:8.6px;line-height:10px;color:#5b5bb0;transform:scaleX(0.985);transform-origin:0 0;">Respiration</div>
<div class="a nw" style="left:90.50px;top:482.80px;font-size:8.6px;line-height:10px;color:#444;transform:scaleX(0.985);transform-origin:0 0;">per</div>
<div class="a nw" style="left:90.50px;top:492.60px;font-size:8.6px;line-height:10px;color:#444;transform:scaleX(0.985);transform-origin:0 0;">min</div>
<div class="a nw" style="left:162.28px;top:487.90px;font-size:8.6px;line-height:10px;color:#4a4a4a;transform:scaleX(0.985);transform-origin:0 0;">16</div>
<div class="a nw" style="left:217.38px;top:487.90px;font-size:8.6px;line-height:10px;color:#4a4a4a;transform:scaleX(0.985);transform-origin:0 0;">14</div>
<div class="a nw" style="left:258.68px;top:487.90px;font-size:8.6px;line-height:10px;color:#4a4a4a;transform:scaleX(0.985);transform-origin:0 0;">15</div>
<div class="a nw" style="left:298.38px;top:487.90px;font-size:8.6px;line-height:10px;color:#4a4a4a;transform:scaleX(0.985);transform-origin:0 0;">15</div>
<div class="a nw" style="left:23.75px;top:503.90px;font-size:8.6px;line-height:10px;color:#5b5bb0;transform:scaleX(0.985);transform-origin:0 0;">Temperature</div>
<div class="a nw" style="left:90.50px;top:503.90px;font-size:8.6px;line-height:10px;color:#444;transform:scaleX(0.985);transform-origin:0 0;">F</div>
<div class="a nw" style="left:150.51px;top:503.90px;font-size:8.6px;line-height:10px;color:#4a4a4a;transform:scaleX(0.985);transform-origin:0 0;">91.00</div>
<div class="a nw" style="left:205.61px;top:503.90px;font-size:8.6px;line-height:10px;color:#4a4a4a;transform:scaleX(0.985);transform-origin:0 0;">90.00</div>
<div class="a nw" style="left:246.91px;top:503.90px;font-size:8.6px;line-height:10px;color:#4a4a4a;transform:scaleX(0.985);transform-origin:0 0;">90.00</div>
<div class="a nw" style="left:286.61px;top:503.90px;font-size:8.6px;line-height:10px;color:#4a4a4a;transform:scaleX(0.985);transform-origin:0 0;">90.00</div>
<div class="a" style="left:507px;top:118px;width:9.3px;height:389px;background:#f5f5f5"></div>
<div class="a" style="left:507.9px;top:129px;width:6.7px;height:237px;background:#c3c3c3"></div>
<div class="a" style="left:516.2px;top:118px;width:1px;height:389px;background:#e2e2e2"></div>
<div class="a" style="left:517.5px;top:118px;width:502.5px;height:17px;background:#ececec"></div>
<div class="a" style="left:521.2px;top:124.5px;width:37.6px;height:10.5px;background:#f9f9f9;border:1px solid #e0e0e0;border-bottom:none"></div>
<div class="a nw" style="left:523.50px;top:124.20px;font-size:8.3px;line-height:10px;color:#7a7a7a;transform:scaleX(0.901);transform-origin:0 0;">Summary</div>
<div class="a" style="left:560.6px;top:123px;width:51.3px;height:12px;background:#3b78c3;border-radius:2px 2px 0 0"></div>
<div class="a nw" style="left:564.70px;top:125.00px;font-size:7.6px;line-height:10px;color:#fff;transform:scaleX(0.977);transform-origin:0 0;">Eye Exam</div>
<div class="a" style="left:518.1px;top:134.5px;width:416.5px;height:17.5px;background:#c9dcef"></div>
<div class="a" style="left:518.1px;top:159px;width:416.5px;height:1.2px;background:#6c6c6c"></div>
<div class="a nw" style="left:538.75px;top:137.10px;font-size:9.4px;line-height:11px;color:#3e3e3e;transform:scaleX(0.947);transform-origin:0 0;">Eye Exam</div>
<div class="a nw" style="left:606.40px;top:137.10px;font-size:9.4px;line-height:11px;color:#3e3e3e;transform:scaleX(0.946);transform-origin:0 0;">File</div>
<div class="a nw" style="left:636.90px;top:137.10px;font-size:9.4px;line-height:11px;color:#3e3e3e;transform:scaleX(0.959);transform-origin:0 0;">Edit</div>
<div class="a nw" style="left:668.60px;top:137.10px;font-size:9.4px;line-height:11px;color:#3e3e3e;transform:scaleX(0.962);transform-origin:0 0;">View</div>
<div class="a nw" style="left:703.75px;top:137.10px;font-size:9.4px;line-height:11px;color:#3e3e3e;transform:scaleX(0.958);transform-origin:0 0;">Library</div>
<div class="a nw" style="left:747.20px;top:137.10px;font-size:9.4px;line-height:11px;color:#3e3e3e;transform:scaleX(0.959);transform-origin:0 0;">Help</div>
<div class="a nw" style="left:542.61px;top:164.60px;font-size:9.2px;line-height:10px;color:#333;font-weight:bold;transform:scaleX(0.985);transform-origin:0 0;">Visit Date:</div>
<div class="a nw" style="left:545.46px;top:176.90px;font-size:9.2px;line-height:10px;color:#333;font-weight:bold;transform:scaleX(0.985);transform-origin:0 0;">Provider:</div>
<div class="a nw" style="left:527.87px;top:189.30px;font-size:9.2px;line-height:10px;color:#333;font-weight:bold;transform:scaleX(0.985);transform-origin:0 0;">Reason/Plan:</div>
<div class="a nw" style="left:560.58px;top:231.80px;font-size:9.2px;line-height:10px;color:#333;font-weight:bold;transform:scaleX(0.985);transform-origin:0 0;">PCP:</div>
<div class="a nw" style="left:527.87px;top:244.00px;font-size:9.2px;line-height:10px;color:#333;font-weight:bold;transform:scaleX(0.985);transform-origin:0 0;">Referred By:</div>
<div class="a nw" style="left:536.43px;top:255.80px;font-size:9.2px;line-height:10px;color:#333;font-weight:bold;transform:scaleX(0.985);transform-origin:0 0;">Insurance:</div>
<div class="a nw" style="left:532.90px;top:267.80px;font-size:9.2px;line-height:10px;color:#333;font-weight:bold;transform:scaleX(0.985);transform-origin:0 0;">Secondary:</div>
<div class="a nw" style="left:589.50px;top:164.00px;font-size:8.8px;line-height:10px;color:#555;transform:scaleX(1.020);transform-origin:0 0;">06/27/2019</div>
<div class="a nw" style="left:588.00px;top:176.30px;font-size:8.8px;line-height:10px;color:#555;">DR. Bill Robinson</div>
<div class="a nw" style="left:597.40px;top:255.50px;font-size:8.8px;line-height:10px;color:#555;transform:scaleX(1.014);transform-origin:0 0;">Aetna Insurance</div>
<div class="a" style="left:588px;top:231.8px;width:84.7px;height:8.8px;border:1px solid #a8a8a8;border-radius:1px;background:#fff"></div>
<div class="a" style="left:588px;top:244px;width:84.7px;height:9.2px;border:1px solid #a8a8a8;border-radius:1px;background:#fff"></div>
<div class="a nw" style="left:590.70px;top:231.70px;font-size:7px;line-height:9px;color:#666;transform:scaleX(1.021);transform-origin:0 0;">Robinson DR. Bill</div>
<svg class="a" style="left:660px;top:230px" width="20" height="26" viewBox="660 230 20 26"><path d="M666.3 234.9 L668.1 236.7 L669.9 234.9" fill="none" stroke="#333" stroke-width="1.1"/><path d="M666.3 247.4 L668.1 249.2 L669.9 247.4" fill="none" stroke="#333" stroke-width="1.1"/></svg>
<svg class="a" style="left:708px;top:196px" width="36" height="34" viewBox="708 196 36 34"><path d="M720.6 216 Q719.6 208 720.8 204 Q722.6 199.8 727.5 199.9 Q732.5 200.2 734 204.5 Q735 211 737.8 223.5 L731 223.5 L727 216Z" fill="#33201c"/><ellipse cx="727" cy="208.6" rx="4.1" ry="5.9" fill="#eec4ae"/><path d="M722.6 207 Q722.8 202.2 727.2 202 Q731.5 202.2 731.8 206 Q730.5 203.6 727 203.8 Q724 204.2 722.6 207Z" fill="#33201c"/><path d="M731.2 205.5 Q732.3 212 731 216 L734 222 Q733.5 212 732.8 205.5Z" fill="#33201c"/><rect x="725" y="213" width="4.6" height="6" fill="#e9bea8"/><path d="M712.2 226.6 Q712.6 221.8 717 220.8 L723.4 219.3 L727.2 226.6Z" fill="#141212"/><path d="M729.8 219.5 L735.8 220.8 Q740.3 222 740.6 226.6 L728.5 226.6Z" fill="#141212"/><path d="M723.4 219.1 L727.2 226.6 L728.5 226.6 L729.8 219.3 L728.8 217 L724.5 217Z" fill="#f0d2c0"/><path d="M731.5 215.5 Q734 219.5 737.8 224.5 L735 224.5 Q732 221 730.5 217.5Z" fill="#33201c"/></svg>
<div class="a" style="left:518.2px;top:282.8px;width:416.3px;height:1.3px;background:#606060;box-shadow:0 1.5px 2.5px rgba(0,0,0,0.35)"></div>
<div class="a" style="left:579.5px;top:308.3px;width:294.3px;height:220px;background:#fff;border:1px solid #7a7a7a;border-radius:3px;box-shadow:1.5px 1px 2px rgba(0,0,0,0.35)"></div>
<div class="a nw" style="left:588.10px;top:315.00px;font-size:7.2px;line-height:9px;color:#2a2a2a;font-weight:bold;transform:scaleX(1.037);transform-origin:0 0;">HPI:</div>
<svg class="a" style="left:836px;top:309px" width="36" height="14" viewBox="836 309 36 14"><circle cx="842.3" cy="314" r="1.4" fill="#222"/><path d="M839.5 319 Q839.8 316 842.3 315.8 Q844.8 316 845.1 319Z" fill="#333"/><rect x="850.6" y="312.6" width="6.2" height="6.4" rx="1" fill="#333"/><path d="M850.6 314.3 L856.8 314.3 M850.6 316 L856.8 316 M850.6 317.6 L856.8 317.6" stroke="#aaa" stroke-width="0.4"/><path d="M868.3 312.6 L864 316.8" stroke="#111" stroke-width="1.3" stroke-linecap="round"/><path d="M864.2 316.2 Q861.5 316.5 861.5 319.2 Q864.3 319.5 865 317Z" fill="#111"/></svg>
<div class="a" style="left:645.3px;top:327.7px;width:23.3px;height:11px;background:#cfd39a;border-radius:2px 2px 0 0;box-shadow:1px 0 1px rgba(0,0,0,0.2)"></div>
<div class="a" style="left:669.4px;top:327.7px;width:23.3px;height:11px;background:#cfd39a;border-radius:2px 2px 0 0;box-shadow:1px 0 1px rgba(0,0,0,0.2)"></div>
<div class="a nw" style="left:650.50px;top:329.40px;font-size:7px;line-height:8px;color:#3e3e3e;transform:scaleX(0.815);transform-origin:0 0;">CC 2</div>
<div class="a nw" style="left:674.60px;top:329.40px;font-size:7px;line-height:8px;color:#3e3e3e;transform:scaleX(0.815);transform-origin:0 0;">CC 3</div>
<div class="a" style="left:588px;top:338.4px;width:273.5px;height:164.4px;background:#fff;border:1px solid #888;border-top:1px solid #f4f4f4;border-left:1.3px solid #555;border-radius:4px;box-shadow:1.5px 1.5px 2px rgba(0,0,0,0.4)"></div>
<div class="a" style="left:615px;top:327.7px;width:29.5px;height:11.5px;background:#fff;border:1px solid #d0d0d0;border-bottom:none;border-radius:2px 2px 0 0;box-shadow:-1px 0 1px rgba(0,0,0,0.15)"></div>
<svg class="a" style="left:618px;top:329px" width="9" height="8" viewBox="0 0 9 8"><path d="M1.8 3.8 L3.6 5.8 L7.2 1.8" fill="none" stroke="#4a4a8a" stroke-width="1.4"/></svg>
<div class="a nw" style="left:627.00px;top:329.40px;font-size:7px;line-height:8px;color:#8a8ab5;transform:scaleX(0.834);transform-origin:0 0;">CC 1</div>
<div class="a nw" style="left:594.30px;top:347.80px;font-size:7.6px;line-height:9px;color:#2a2a2a;font-weight:bold;transform:scaleX(0.978);transform-origin:0 0;">Chief Complaint 1:</div>
<div class="a" style="left:594.3px;top:357.3px;width:245.1px;height:28.1px;background:#f2f6fb;border:1px solid #d4dee8;border-radius:2px"></div>
<div class="a nw" style="left:596.20px;top:360.00px;font-size:7.6px;line-height:10px;color:#474747;transform:scaleX(0.984);transform-origin:0 0;">Blurry vision during morning hours</div>
<div class="a nw" style="left:594.40px;top:399.20px;font-size:7.6px;line-height:9px;color:#2a2a2a;font-weight:bold;transform:scaleX(0.961);transform-origin:0 0;">HPI:</div>
<div class="a nw" style="left:737.10px;top:399.20px;font-size:7.6px;line-height:9px;color:#2a2a2a;font-weight:bold;transform:scaleX(0.976);transform-origin:0 0;">Chronic Problems:</div>
<div class="a" style="left:594.4px;top:408.5px;width:127.4px;height:71.2px;background:#f2f6fb;border:1px solid #d4dee8;border-radius:2px"></div>
<div class="a nw" style="left:596.40px;top:411.80px;font-size:7.6px;line-height:10px;color:#474747;transform:scaleX(0.986);transform-origin:0 0;">HPI here...</div>
<div class="a" style="left:596.5px;top:420.6px;width:12px;height:1px;border-bottom:1px dotted #e04040"></div>
<div class="a" style="left:737.1px;top:408.5px;width:109.9px;height:20.2px;background:#f2f6fb;border:1px solid #d4dee8;border-radius:2px"></div>
<div class="a nw" style="left:738.30px;top:411.80px;font-size:7.6px;line-height:10px;color:#474747;">Watery eyes</div>
<div class="a" style="left:737.1px;top:433.5px;width:109.9px;height:21.2px;background:#f9ef9e;border:1px solid #7fc0a6;border-radius:2px"></div>
<div class="a" style="left:739.5px;top:436.5px;width:1px;height:8px;background:#333"></div>
<div class="a" style="left:737.1px;top:459px;width:109.9px;height:20.7px;background:#fdf7da;border:1px solid #e8e2c0;border-radius:2px"></div>
<svg class="a" style="left:590px;top:355px" width="260" height="130" viewBox="590 355 260 130"><path d="M834.4 383.9 L837.9 380.4 M835.9 383.9 L837.9 381.9" stroke="#9a9a9a" stroke-width="0.6"/><path d="M716.8 478.2 L720.3 474.7 M718.3 478.2 L720.3 476.2" stroke="#9a9a9a" stroke-width="0.6"/><path d="M842 427.2 L845.5 423.7 M843.5 427.2 L845.5 425.2" stroke="#9a9a9a" stroke-width="0.6"/><path d="M842 453.2 L845.5 449.7 M843.5 453.2 L845.5 451.2" stroke="#9a9a9a" stroke-width="0.6"/><path d="M842 478.2 L845.5 474.7 M843.5 478.2 L845.5 476.2" stroke="#9a9a9a" stroke-width="0.6"/></svg>
<div class="a nw" style="left:621.00px;top:491.60px;font-size:6.2px;line-height:8px;color:#858585;transform:scaleX(0.959);transform-origin:0 0;">Detailed HPI: &gt; 3 HPI elements OR the status of three chronic/inactive problems</div>
<div class="a" style="left:934.3px;top:134.6px;width:75px;height:380px;background:#f4f6dd;border:1px solid #c4c4b4"></div>
<svg class="a" style="left:938px;top:148px" width="68" height="18" viewBox="938 148 68 18"><path d="M943.5 152.4 L948.6 152.4 L950.8 154.6 L950.8 161 L943.5 161Z" fill="#f0f0e8" stroke="#7a7a72" stroke-width="0.9"/><rect x="945.3" y="156.5" width="3.8" height="3" fill="#9a9a90"/><ellipse cx="959.5" cy="153.3" rx="3.7" ry="1.3" fill="#111"/><rect x="955.8" y="153.3" width="7.4" height="7.4" fill="#111"/><ellipse cx="959.5" cy="160.6" rx="3.7" ry="1.1" fill="#111"/><path d="M955.8 155.6 L963.2 155.6 M955.8 158 L963.2 158" stroke="#f4f6dd" stroke-width="0.6"/><path d="M976.6 152.6 L971.5 157.8" stroke="#111" stroke-width="1.6" stroke-linecap="round"/><path d="M971.6 157 Q968.5 157.5 968 161 Q971.8 161.2 972.8 158.3Z" fill="#111"/><circle cx="985.2" cy="154.3" r="1.7" fill="#111"/><path d="M981.3 161.2 Q981.5 157 985.2 156.8 Q988.9 157 989.1 161.2Z" fill="#555"/><path d="M985.2 157 L985.2 160.5" stroke="#eee" stroke-width="0.8"/><path d="M994.6 154.6 L999.3 159.3 M999.3 154.6 L994.6 159.3" stroke="#e8806a" stroke-width="1.6"/></svg>
<div class="a nw" style="left:939.90px;top:174.70px;font-size:7.9px;line-height:9px;color:#333;font-weight:bold;transform:scaleX(1.013);transform-origin:0 0;text-decoration:underline;text-decoration-thickness:0.9px;text-underline-offset:1px">POH:</div>
<div class="a nw" style="left:994.10px;top:177.20px;font-size:4.6px;line-height:5px;color:#7a7a7a;transform:scaleX(0.953);transform-origin:0 0;">Add</div>
<div class="a nw" style="left:939.90px;top:197.20px;font-size:7.9px;line-height:9px;color:#333;font-weight:bold;transform:scaleX(1.005);transform-origin:0 0;text-decoration:underline;text-decoration-thickness:0.9px;text-underline-offset:1px">POS:</div>
<div class="a nw" style="left:994.10px;top:199.70px;font-size:4.6px;line-height:5px;color:#7a7a7a;transform:scaleX(0.953);transform-origin:0 0;">Add</div>
<div class="a nw" style="left:939.90px;top:219.30px;font-size:7.9px;line-height:9px;color:#333;font-weight:bold;text-decoration:underline;text-decoration-thickness:0.9px;text-underline-offset:1px">PMH:</div>
<div class="a nw" style="left:994.10px;top:221.80px;font-size:4.6px;line-height:5px;color:#7a7a7a;transform:scaleX(0.953);transform-origin:0 0;">Add</div>
<div class="a nw" style="left:939.90px;top:285.10px;font-size:7.9px;line-height:9px;color:#333;font-weight:bold;transform:scaleX(1.035);transform-origin:0 0;text-decoration:underline;text-decoration-thickness:0.9px;text-underline-offset:1px">Surgery:</div>
<div class="a nw" style="left:994.10px;top:287.60px;font-size:4.6px;line-height:5px;color:#7a7a7a;transform:scaleX(0.953);transform-origin:0 0;">Add</div>
<div class="a nw" style="left:939.90px;top:307.50px;font-size:7.9px;line-height:9px;color:#333;font-weight:bold;transform:scaleX(1.051);transform-origin:0 0;text-decoration:underline;text-decoration-thickness:0.9px;text-underline-offset:1px">Medication:</div>
<div class="a nw" style="left:994.10px;top:310.00px;font-size:4.6px;line-height:5px;color:#7a7a7a;transform:scaleX(0.953);transform-origin:0 0;">Add</div>
<div class="a nw" style="left:939.90px;top:329.50px;font-size:7.9px;line-height:9px;color:#333;font-weight:bold;transform:scaleX(1.058);transform-origin:0 0;text-decoration:underline;text-decoration-thickness:0.9px;text-underline-offset:1px">Allergy:</div>
<div class="a nw" style="left:994.10px;top:332.00px;font-size:4.6px;line-height:5px;color:#7a7a7a;transform:scaleX(0.953);transform-origin:0 0;">Add</div>
<div class="a nw" style="left:939.90px;top:352.10px;font-size:7.9px;line-height:9px;color:#333;font-weight:bold;transform:scaleX(1.007);transform-origin:0 0;text-decoration:underline;text-decoration-thickness:0.9px;text-underline-offset:1px">Soc Hx:</div>
<div class="a nw" style="left:994.10px;top:354.60px;font-size:4.6px;line-height:5px;color:#7a7a7a;transform:scaleX(0.953);transform-origin:0 0;">Add</div>
<div class="a nw" style="left:939.90px;top:385.10px;font-size:7.9px;line-height:9px;color:#333;font-weight:bold;transform:scaleX(1.019);transform-origin:0 0;text-decoration:underline;text-decoration-thickness:0.9px;text-underline-offset:1px">FH:</div>
<div class="a nw" style="left:994.10px;top:387.60px;font-size:4.6px;line-height:5px;color:#7a7a7a;transform:scaleX(0.953);transform-origin:0 0;">Add</div>
<div class="a nw" style="left:939.90px;top:418.40px;font-size:7.9px;line-height:9px;color:#333;font-weight:bold;transform:scaleX(0.993);transform-origin:0 0;text-decoration:underline;text-decoration-thickness:0.9px;text-underline-offset:1px">ROS:</div>
<div class="a nw" style="left:994.10px;top:420.90px;font-size:4.6px;line-height:5px;color:#7a7a7a;transform:scaleX(0.953);transform-origin:0 0;">Add</div>
<div class="a nw" style="left:939.70px;top:231.10px;font-size:7.7px;line-height:9px;color:#383838;transform:scaleX(0.971);transform-origin:0 0;">Vitamin B12</div>
<div class="a nw" style="left:939.70px;top:241.80px;font-size:7.7px;line-height:9px;color:#383838;transform:scaleX(0.980);transform-origin:0 0;">deficiency anemia</div>
<div class="a nw" style="left:939.70px;top:252.50px;font-size:7.7px;line-height:9px;color:#383838;transform:scaleX(0.954);transform-origin:0 0;">due to intrinsic</div>
<div class="a nw" style="left:939.70px;top:262.90px;font-size:7.7px;line-height:9px;color:#383838;transform:scaleX(0.978);transform-origin:0 0;">factor deficiency</div>
<div class="a nw" style="left:939.70px;top:363.60px;font-size:7.7px;line-height:9px;color:#383838;transform:scaleX(0.970);transform-origin:0 0;">Marital: married</div>
<div class="a nw" style="left:939.70px;top:396.90px;font-size:7.7px;line-height:9px;color:#383838;transform:scaleX(0.966);transform-origin:0 0;">Negative</div>
<div class="a nw" style="left:939.70px;top:430.10px;font-size:7.7px;line-height:9px;color:#383838;transform:scaleX(0.966);transform-origin:0 0;">Negative</div>
<div class="a" style="left:1009.5px;top:135px;width:10.5px;height:372px;background:#f4f4f4"></div>
<div class="a" style="left:1010.5px;top:143.8px;width:6.5px;height:66.6px;background:#c3c3c3"></div>
<svg class="a" style="left:500px;top:115px" width="520" height="395" viewBox="500 115 520 395"><path d="M509.6 124.3 L511.4 122.3 L513.2 124.3Z" fill="#505050"/><path d="M509.8 501.2 L511.4 503 L513 501.2Z" fill="#505050"/><path d="M1012 139.9 L1013.7 138 L1015.4 139.9Z" fill="#606060"/><path d="M527.5 139.8 L533.8 139.8 M530.6 139.5 L530.6 146.5" stroke="#8a9aa8" stroke-width="1.3"/><path d="M528 140.5 Q530.6 143.5 533.3 140.5" fill="none" stroke="#8a9aa8" stroke-width="0.9"/><path d="M604 127.6 L607.4 131 M607.4 127.6 L604 131" stroke="#fff" stroke-width="1.3"/></svg>
<div class="a" style="left:0;top:0;width:1024px;height:5px;background:#000"></div>
<div class="a" style="left:0;top:0;width:3px;height:515px;background:#000"></div>
<div class="a" style="left:1020px;top:0;width:4px;height:515px;background:#000"></div>
<div class="a" style="left:0;top:507px;width:1024px;height:8px;background:#000"></div>
<div class="a" style="left:0;top:0;width:1024px;height:1px;background:#333"></div>
<svg class="a" style="left:0;top:0" width="16" height="10" viewBox="0 0 16 10"><path d="M0 0 L13.5 0 L13 1.2 L7 2.3 L3.2 4.2 L1.6 6 L0.6 8.2 L0 8.5Z" fill="#5a5a5a"/></svg>
</div></body></html>
